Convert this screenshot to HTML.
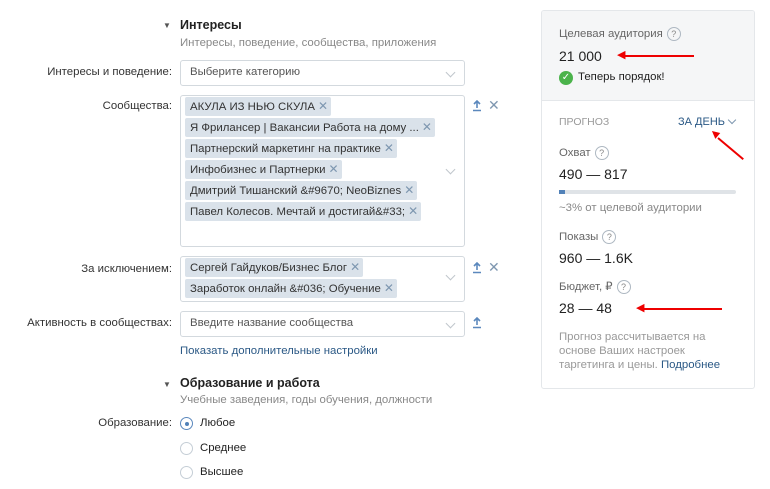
<!DOCTYPE html>
<html><head><meta charset="utf-8"><style>
body{margin:0;width:770px;height:489px;background:#fff;font-family:"Liberation Sans",Arial,sans-serif;font-size:11.4px;color:#000;position:relative;overflow:hidden}
.a{position:absolute;white-space:nowrap}
.lbl{position:absolute;right:598px;color:#333;text-align:right;white-space:nowrap}
.inp{position:absolute;left:180px;width:285px;border:1px solid #d3d9de;border-radius:3px;box-sizing:border-box;background:#fff}
.ph{color:#555;position:absolute;left:9px;top:5px}
.chev{position:absolute;right:10px;width:6px;height:6px;border-right:1px solid #c0c6cc;border-bottom:1px solid #c0c6cc;transform:rotate(45deg)}
.tag{position:absolute;left:4px;height:19px;line-height:19px;background:#dae2ea;color:#333;padding:0 3px 0 5px;border-radius:2px;white-space:nowrap}
.tag b{color:#7e97b0;font-weight:normal;font-size:12px;margin-left:3px}
.up{position:absolute}
.x{position:absolute;color:#7e97b0;font-size:14px}
.q{display:inline-block;width:12px;height:12px;border:1px solid #aeb8c2;border-radius:50%;font-size:9px;line-height:12px;text-align:center;color:#888;vertical-align:0px;margin-left:4px}
.radio{position:absolute;left:180px;width:13px;height:13px;border:1px solid #c5ced6;border-radius:50%;box-sizing:border-box}
.arrow{position:absolute;height:2px;background:#e00}
.big{font-size:14px;color:#222}
</style></head><body>
<svg width="0" height="0" style="position:absolute"><symbol id="up" viewBox="0 0 10 12"><path d="M5 1v7M2 4l3-3 3 3M1 10.5h8" stroke="#5b88bd" stroke-width="1.6" fill="none"/></symbol></svg>
<div class="a" style="left:163px;top:21px;font-size:8px;color:#555">▼</div>
<div class="a" style="left:180px;top:18px;font-weight:bold;color:#222;font-size:12.5px">Интересы</div>
<div class="a" style="left:180px;top:37px;color:#888">Интересы, поведение, сообщества, приложения</div>

<div class="lbl" style="top:66px">Интересы и поведение:</div>
<div class="inp" style="top:60px;height:26px"><span class="ph">Выберите категорию</span><div class="chev" style="top:8px"></div></div>

<div class="lbl" style="top:100px">Сообщества:</div>
<div class="inp" style="top:95px;height:152px">
<div class="tag" style="top:1px">АКУЛА ИЗ НЬЮ СКУЛА<b>✕</b></div>
<div class="tag" style="top:22px">Я Фрилансер | Вакансии Работа на дому ...<b>✕</b></div>
<div class="tag" style="top:43px">Партнерский маркетинг на практике<b>✕</b></div>
<div class="tag" style="top:64px">Инфобизнес и Партнерки<b>✕</b></div>
<div class="tag" style="top:85px">Дмитрий Тишанский &amp;#9670; NeoBiznes<b>✕</b></div>
<div class="tag" style="top:106px">Павел Колесов. Мечтай и достигай&amp;#33;<b>✕</b></div>
<div class="chev" style="top:70px"></div></div>
<svg class="up" style="left:472px;top:100px" width="10" height="12"><use href="#up"/></svg><div class="x" style="left:488px;top:97px">✕</div>

<div class="lbl" style="top:263px">За исключением:</div>
<div class="inp" style="top:256px;height:46px">
<div class="tag" style="top:1px">Сергей Гайдуков/Бизнес Блог<b>✕</b></div>
<div class="tag" style="top:22px">Заработок онлайн &amp;#036; Обучение<b>✕</b></div>
<div class="chev" style="top:15px"></div></div>
<svg class="up" style="left:472px;top:262px" width="10" height="12"><use href="#up"/></svg><div class="x" style="left:488px;top:259px">✕</div>

<div class="lbl" style="top:317px">Активность в сообществах:</div>
<div class="inp" style="top:311px;height:26px"><span class="ph">Введите название сообщества</span><div class="chev" style="top:8px"></div></div>
<svg class="up" style="left:472px;top:317px" width="10" height="12"><use href="#up"/></svg>
<div class="a" style="left:180px;top:345px;color:#2a5885">Показать дополнительные настройки</div>

<div class="a" style="left:163px;top:380px;font-size:8px;color:#555">▼</div>
<div class="a" style="left:180px;top:376px;font-weight:bold;color:#222;font-size:12.5px">Образование и работа</div>
<div class="a" style="left:180px;top:394px;color:#888">Учебные заведения, годы обучения, должности</div>
<div class="lbl" style="top:417px">Образование:</div>
<div class="radio" style="top:417px;border-color:#5b88bd"><div style="position:absolute;left:3.5px;top:3.5px;width:4px;height:4px;border-radius:50%;background:#5181b8"></div></div>
<div class="a" style="left:200px;top:417px;color:#222">Любое</div>
<div class="radio" style="top:442px"></div><div class="a" style="left:200px;top:442px;color:#222">Среднее</div>
<div class="radio" style="top:466px"></div><div class="a" style="left:200px;top:466px;color:#222">Высшее</div>

<div style="position:absolute;left:541px;top:10px;width:214px;height:379px;border:1px solid #e4e7ea;border-radius:3px;box-sizing:border-box;background:#fff;overflow:hidden">
<div style="height:89px;background:#f5f6f7;border-bottom:1px solid #e4e7ea"></div></div>
<div class="a" style="left:559px;top:27px;color:#666">Целевая аудитория<span class="q">?</span></div>
<div class="a big" style="left:559px;top:48px">21 000</div>
<div class="arrow" style="left:622px;top:55px;width:72px"></div><div class="a" style="left:617px;top:48px;color:#e00;font-size:11px">◀</div>
<div class="a" style="left:559px;top:71px;width:14px;height:14px;border-radius:50%;background:#4bb34b;color:#fff;font-size:10px;line-height:14px;text-align:center">✓</div>
<div class="a" style="left:578px;top:71px;color:#222">Теперь порядок!</div>

<div class="a" style="left:559px;top:116px;color:#999;font-size:10.5px">ПРОГНОЗ</div>
<div class="a" style="left:678px;top:116px;color:#2a5885;font-size:11px">ЗА ДЕНЬ</div>
<div class="a" style="left:729px;top:117px;width:5px;height:5px;border-right:1px solid #7e97b0;border-bottom:1px solid #7e97b0;transform:rotate(45deg)"></div>
<div class="a" style="left:718px;top:137px;width:33px;height:2px;background:#e00;transform:rotate(40deg);transform-origin:left"></div>
<div class="a" style="left:711px;top:128px;color:#e00;font-size:10px;transform:rotate(40deg)">◀</div>
<div class="a" style="left:559px;top:146px;color:#666">Охват<span class="q">?</span></div>
<div class="a big" style="left:559px;top:166px">490 — 817</div>
<div class="a" style="left:559px;top:190px;width:177px;height:4px;background:#dfe3e7;border-radius:2px"><div style="width:6px;height:4px;background:#5181b8"></div></div>
<div class="a" style="left:559px;top:202px;color:#888">~3% от целевой аудитории</div>
<div class="a" style="left:559px;top:230px;color:#666">Показы<span class="q">?</span></div>
<div class="a big" style="left:559px;top:250px">960 — 1.6K</div>
<div class="a" style="left:559px;top:279px;color:#666">Бюджет, ₽<span class="q">?</span></div>
<div class="a big" style="left:559px;top:300px">28 — 48</div>
<div class="arrow" style="left:642px;top:308px;width:80px"></div><div class="a" style="left:636px;top:301px;color:#e00;font-size:11px">◀</div>
<div class="a" style="left:559px;top:330px;color:#999;line-height:14px;white-space:normal;width:180px">Прогноз рассчитывается на основе Ваших настроек таргетинга и цены. <span style="color:#2a5885">Подробнее</span></div>
</body></html>
